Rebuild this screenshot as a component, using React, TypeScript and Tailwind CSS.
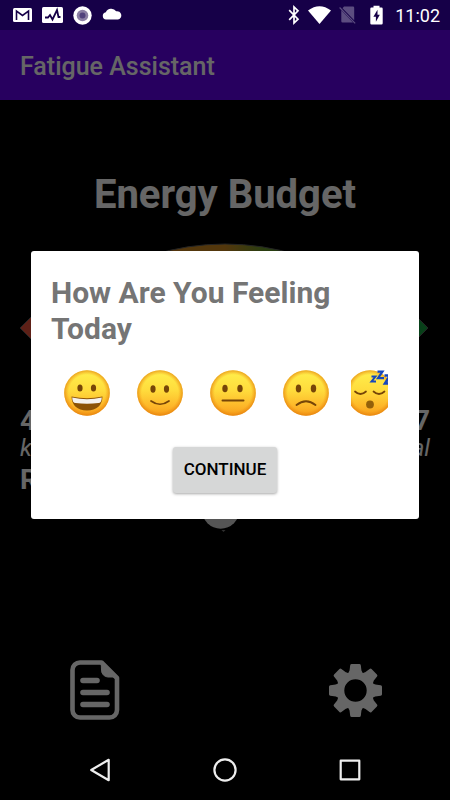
import { useState } from "react"

type Mood = "great" | "good" | "neutral" | "bad" | "tired"

const moods: { id: Mood; label: string }[] = [
  { id: "great", label: "Great" },
  { id: "good", label: "Good" },
  { id: "neutral", label: "Neutral" },
  { id: "bad", label: "Bad" },
  { id: "tired", label: "Tired" },
]

const StatusBar = () => (
  <div className="flex h-[30px] items-center justify-between bg-[#160048] pl-[13px] pr-[10px] text-white">
    <div className="flex items-center gap-[10px]">
      {/* Mail */}
      <svg width="19" height="16" viewBox="0 0 19 16">
        <rect y="1" width="19" height="14" rx="1.5" fill="currentColor" />
        <path d="M3.5 13V4l6 4.5 6-4.5v9" fill="none" stroke="#160048" strokeWidth="1.6" />
      </svg>
      {/* Activity monitor */}
      <svg width="21" height="18" viewBox="0 0 21 18">
        <rect y="1" width="21" height="16" rx="1.5" fill="currentColor" />
        <path d="M3 11.5h3l2-2.5 2.5 4.5L15 4l1.5 7h2" fill="none" stroke="#160048" strokeWidth="1.8" />
      </svg>
      {/* Recorder */}
      <svg width="19" height="19" viewBox="0 0 19 19">
        <circle cx="9.5" cy="9.5" r="9.2" fill="currentColor" />
        <circle cx="9.5" cy="9.5" r="5.8" fill="#8b7fa4" />
        <circle cx="9.5" cy="9.5" r="3" fill="#51417c" />
      </svg>
      {/* Cloud */}
      <svg width="20" height="14" viewBox="0 0 20 14">
        <path d="M4 11.5a3.7 3.7 0 0 1-.2-7.300A6 6 0 0 1 14.200 3.300 4 4 0 0 1 16 11.500z" fill="currentColor" />
      </svg>
    </div>
    <div className="flex items-center">
      {/* Bluetooth */}
      <svg className="mr-2" width="12" height="20" viewBox="0 0 12 20" fill="none" stroke="currentColor" strokeWidth="1.7">
        <path d="M1.200 5.200 10 14.200 6 18V2l4 3.800-8.800 9" />
      </svg>
      {/* Wifi */}
      <svg className="mr-2" width="23" height="18" viewBox="0 0 23 18">
        <path d="M0 4.500Q11.500-4 23 4.500L11.500 18z" fill="currentColor" />
      </svg>
      {/* No SIM */}
      <svg className="mr-[14px]" width="17" height="18" viewBox="0 0 17 18">
        <path d="M5 .5h9a1.200 1.200 0 0 1 1.200 1.200v12.600L3.500 2.300zM2.300 4.200 14 16.500H3.500a1.200 1.200 0 0 1-1.200-1.200z" fill="#5c4d80" />
        <path d="M.6 1.500 16.200 17.400" stroke="#5c4d80" strokeWidth="1.200" />
      </svg>
      {/* Battery charging */}
      <svg className="mr-3" width="13" height="20" viewBox="0 0 13 20">
        <path d="M1.500 2.500H3.500V.8h6v1.700h2A1.200 1.200 0 0 1 12.700 3.700v14.600a1.200 1.200 0 0 1-1.200 1.200h-10A1.200 1.200 0 0 1 .3 18.300V3.700a1.200 1.200 0 0 1 1.200-1.200z" fill="currentColor" />
        <path d="M7.500 4.800 3.400 11.700h2.500v5.100l3.900-7H7.500z" fill="#160048" />
      </svg>
      <span className="pt-px text-lg leading-[30px]">11:02</span>
    </div>
  </div>
)

const Gauge = () => (
  <svg className="w-full" viewBox="0 0 410 163" aria-hidden="true">
    <defs>
      <linearGradient id="gauge" x1="0" x2="1">
        <stop offset="0" stopColor="#e8503a" />
        <stop offset="0.4" stopColor="#d08a20" />
        <stop offset="0.5" stopColor="#cf8a20" />
        <stop offset="0.6" stopColor="#6a9a2a" />
        <stop offset="1" stopColor="#16a040" />
      </linearGradient>
    </defs>
    <path
      d="M15 148A190 147 0 0 1 395 148H340A135 100 0 0 0 70 148z"
      fill="url(#gauge)"
      stroke="#5a5a5a"
      strokeWidth="1"
    />
    <path d="M0 85 16 69v32z" fill="#e8503a" stroke="#5a5a5a" />
    <path d="M408 85 392 69v32z" fill="#16a040" stroke="#5a5a5a" />
  </svg>
)

const DocumentIcon = () => (
  <svg width="60" height="60" viewBox="0 0 60 60" fill="none" stroke="currentColor" strokeLinecap="round">
    <path
      d="M15.500 2.500H37L52.500 18v32a7.500 7.500 0 0 1-7.500 7.500H15.500A7.500 7.500 0 0 1 8 50V10a7.500 7.500 0 0 1 7.500-7.500z"
      transform="translate(-.5 0)"
      strokeWidth="4.6"
      strokeLinejoin="round"
    />
    <path d="M37 1.500 53 17H43.500A6.500 6.500 0 0 1 37 10.500z" transform="translate(-.5 0)" fill="currentColor" />
    <path d="M18 20.500h14M18 32.500h24M18 44.500h24" strokeWidth="5.6" />
  </svg>
)

const GearIcon = () => (
  <svg width="60" height="60" viewBox="0 0 60 60" fill="none" stroke="currentColor">
    <circle cx="30.5" cy="30.5" r="15" strokeWidth="7.6" />
    <g fill="currentColor" strokeWidth="3" strokeLinejoin="round">
      <path id="tooth-pair" d="M24.500 14l1.500-3 .7-5.500h7.600l.7 5.500 1.500 3zM24.500 47l1.500 3 .7 5.500h7.600l.7-5.500 1.500-3z" />
      <use href="#tooth-pair" transform="rotate(45 30.5 30.5)" />
      <use href="#tooth-pair" transform="rotate(90 30.5 30.5)" />
      <use href="#tooth-pair" transform="rotate(135 30.5 30.5)" />
    </g>
  </svg>
)

const Face = ({ mood }: { mood: Mood }) => (
  <svg className="h-[46px] w-[46px] shrink-0" viewBox="0 0 46 46" aria-hidden="true">
    <defs>
      <linearGradient id={`skin-${mood}`} x1="0" y1="0" x2="0" y2="1">
        <stop offset="0" stopColor="#fff04c" />
        <stop offset="0.45" stopColor="#ffdb3c" />
        <stop offset="0.8" stopColor="#fdb528" />
        <stop offset="1" stopColor="#f59d1a" />
      </linearGradient>
      <radialGradient id={`edge-${mood}`}>
        <stop offset="0.8" stopColor="#f08a10" stopOpacity="0" />
        <stop offset="1" stopColor="#e07808" stopOpacity="0.65" />
      </radialGradient>
    </defs>
    <circle cx="23" cy="23" r="22.8" fill={`url(#skin-${mood})`} />
    <circle cx="23" cy="23" r="22.8" fill={`url(#edge-${mood})`} />
    {mood === "great" && (
      <>
        <g fill="#764508">
          <ellipse cx="16" cy="18" rx="2.6" ry="3.5" />
          <ellipse cx="29.5" cy="18" rx="2.6" ry="3.5" />
        </g>
        <path d="M7.500 26.500Q23 30 38.500 26.500 38 40 23 40.500 8 40 7.500 26.500z" fill="#8c5205" />
        <path d="M8.200 27.500Q23 31 37.800 27.500 37.500 33 34.500 33 23 34.500 11.500 33 8.500 33 8.200 27.500z" fill="#f4f1ee" />
      </>
    )}
    {mood === "good" && (
      <>
        <g fill="#764508">
          <ellipse cx="16" cy="19" rx="2.6" ry="3.7" />
          <ellipse cx="29.5" cy="19" rx="2.6" ry="3.7" />
        </g>
        <path d="M14 31Q23 37.500 32 31" fill="none" stroke="#764508" strokeWidth="1.700" strokeLinecap="round" />
      </>
    )}
    {mood === "neutral" && (
      <>
        <g fill="#764508">
          <ellipse cx="15" cy="18.5" rx="2.7" ry="3.8" />
          <ellipse cx="30" cy="18.5" rx="2.7" ry="3.8" />
        </g>
        <path d="M12.500 30.500h21" stroke="#764508" strokeWidth="2" strokeLinecap="round" />
      </>
    )}
    {mood === "bad" && (
      <>
        <g fill="#764508">
          <ellipse cx="15.5" cy="18.5" rx="2.7" ry="4" />
          <ellipse cx="30.5" cy="18.5" rx="2.7" ry="4" />
        </g>
        <path d="M13.500 35Q23 27.500 32.500 35" fill="none" stroke="#764508" strokeWidth="1.900" strokeLinecap="round" />
      </>
    )}
    {mood === "tired" && (
      <>
        <path d="M8 21.500q5.500 5 11 0M26.500 21.500q5.500 5 11 0" fill="none" stroke="#764508" strokeWidth="1.700" strokeLinecap="round" />
        <circle cx="23" cy="34.5" r="3.9" fill="#93600a" />
        <g fill="none" stroke="#1546bd" strokeWidth="2">
          <path d="M24.500 6.500h4l-4 5H29" />
          <path d="M30.500 1.700h5l-4.500 6.500H37" strokeWidth="2.200" />
          <path d="M37.500 5.500h5.500l-5 8h6" strokeWidth="2.600" />
        </g>
      </>
    )}
  </svg>
)

const FeelingDialog = () => {
  const [selected, setSelected] = useState<Mood | null>(null)

  return (
    <div
      role="dialog"
      aria-labelledby="feeling-title"
      className="w-full rounded-[3px] bg-white px-5 pt-6 pb-[26px]"
    >
      <h2 id="feeling-title" className="text-[30px] font-bold leading-[36px] text-[#757575]">
        How Are You Feeling Today
      </h2>
      <div className="mt-[23px] flex pr-px">
        {moods.map((mood) => (
          <button
            key={mood.id}
            type="button"
            aria-label={mood.label}
            aria-pressed={selected === mood.id}
            onClick={() => setSelected(mood.id)}
            className="flex w-[73px] shrink-0 pr-[10px] pl-2 last:w-auto last:min-w-0 last:flex-1"
          >
            <span className="flex w-full min-w-0 justify-center overflow-hidden">
              <Face mood={mood.id} />
            </span>
          </button>
        ))}
      </div>
      <button
        type="button"
        className="mx-auto mt-[31px] block h-[46px] rounded-[3px] bg-[#d6d7d7] px-[11px] text-[17px] font-medium text-black shadow-[0_1px_3px_rgba(0,0,0,0.35)]"
      >
        CONTINUE
      </button>
    </div>
  )
}

const NavBar = () => (
  <nav className="grid h-[60px] grid-cols-3 bg-black px-[38px] text-[#eeeeee]">
    <button type="button" aria-label="Back" className="flex items-center justify-center">
      <svg width="24" height="24" viewBox="0 0 24 24" fill="none" stroke="currentColor" strokeWidth="2.2" strokeLinejoin="round">
        <path d="M20.700 1.800v20.400L3.200 12z" />
      </svg>
    </button>
    <button type="button" aria-label="Home" className="flex items-center justify-center">
      <svg width="24" height="24" viewBox="0 0 24 24" fill="none" stroke="currentColor" strokeWidth="2.2">
        <circle cx="12" cy="12" r="10.6" />
      </svg>
    </button>
    <button type="button" aria-label="Recent apps" className="flex items-center justify-center">
      <svg width="24" height="24" viewBox="0 0 24 24" fill="none" stroke="currentColor" strokeWidth="2.2" strokeLinejoin="round">
        <rect x="2.7" y="2.7" width="18.6" height="18.6" />
      </svg>
    </button>
  </nav>
)

export default function App() {
  return (
    <div className="flex min-h-screen flex-col bg-black font-['Roboto',sans-serif]">
      <StatusBar />

      <div className="relative flex flex-1 flex-col text-white">
        <header className="flex h-[70px] items-center bg-[#6200ee] px-5 pt-1">
          <h1 className="text-[25px] font-medium">Fatigue Assistant</h1>
        </header>

        <main className="flex flex-1 flex-col px-5 pt-[71px] pb-5">
          <p className="mb-6 text-center text-[40px] font-bold leading-[48px]">Energy Budget</p>
          <Gauge />
          <div className="flex justify-between">
            <div>
              <p className="text-[28px] font-bold leading-[30px]">4</p>
              <p className="text-[24px] italic leading-6">kcal</p>
            </div>
            <div className="text-right">
              <p className="text-[28px] font-bold leading-[30px]">7</p>
              <p className="text-[24px] italic leading-6">kcal</p>
            </div>
          </div>
          <p className="text-[28px] font-bold leading-[40px]">R</p>
          {/* Needle hub */}
          <svg className="mx-auto" width="56" height="32" viewBox="0 0 56 32" aria-hidden="true">
            <path d="M5 10a18.700 18.700 0 0 0 37.400 0z" fill="#d4d4d4" />
            <path d="m24.500 30 2 2 2-2z" fill="#777777" />
          </svg>
          <div className="mt-auto flex justify-between px-[45px]">
            <button type="button" aria-label="Log">
              <DocumentIcon />
            </button>
            <button type="button" aria-label="Settings">
              <GearIcon />
            </button>
          </div>
        </main>

        <div className="absolute inset-0 flex items-center justify-center bg-black/60 px-[31px]">
          <FeelingDialog />
        </div>
      </div>

      <NavBar />
    </div>
  )
}
